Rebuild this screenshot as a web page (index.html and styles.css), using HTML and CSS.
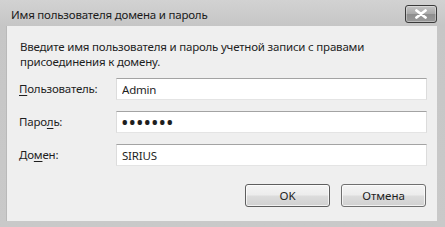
FILE: index.html
```html
<!DOCTYPE html>
<html lang="ru">
<head>
<meta charset="utf-8">
<title>Имя пользователя домена и пароль</title>
<link rel="stylesheet" href="styles.css">
</head>
<body>
<div class="window">
  <div class="titlebar">
    <span class="title">Имя пользователя домена и пароль</span>
    <button class="close" type="button" aria-label="Закрыть">
      <svg width="14" height="10" viewBox="0 0 14 10"><path d="M2.5 1.5 L11.5 8.5 M11.5 1.5 L2.5 8.5" stroke="#fff" stroke-width="2.8" stroke-linecap="round"/></svg>
    </button>
  </div>
  <div class="panel">
    <p class="desc">Введите имя пользователя и пароль учетной записи с правами присоединения к домену.</p>
    <div class="form">
      <label class="label" for="u"><u>П</u>ользователь:</label>
      <input class="field" id="u" type="text" value="Admin">
      <label class="label" for="p">Паро<u>л</u>ь:</label>
      <input class="field pass" id="p" type="password" value="1234567">
      <label class="label" for="d">До<u>м</u>ен:</label>
      <input class="field" id="d" type="text" value="SIRIUS">
    </div>
    <div class="buttons">
      <button class="btn default" type="button">OK</button>
      <button class="btn" type="button">Отмена</button>
    </div>
  </div>
</div>
</body>
</html>
```

FILE: styles.css
```css
html, body {
  margin: 0;
  padding: 0;
}
body {
  width: 445px;
  height: 227px;
  overflow: hidden;
  font-family: "Noto Sans", "Open Sans", sans-serif;
  font-size: 11.5px;
  letter-spacing: -0.2px;
  color: #1e1e1e;
}
.window {
  box-sizing: border-box;
  width: 445px;
  height: 227px;
  display: flex;
  flex-direction: column;
  padding: 0 8px 6px 6px;
  background: linear-gradient(to bottom, #d2d2d2 0px, #c6c6c6 26px, #c9c9c9 100%);
}
.titlebar {
  height: 26px;
  display: flex;
  align-items: flex-start;
}
.title {
  margin: 7px 0 0 5px;
  line-height: 16px;
  color: #1a1a1a;
}
.close {
  margin: 5px 0 0 auto;
  width: 32px;
  height: 18px;
  padding: 0;
  box-sizing: border-box;
  border: 1px solid #3a3a3a;
  border-radius: 3px;
  background: linear-gradient(to bottom, #c4c4c4 0%, #a8a8a8 50%, #8e8e8e 51%, #9a9a9a 100%);
  box-shadow: inset 0 0 0 1px rgba(255,255,255,0.35);
  display: flex;
  align-items: center;
  justify-content: center;
}
.panel {
  flex: 1;
  box-sizing: border-box;
  background: #efefef;
  border-left: 1px solid #b9b9b9;
  padding: 13px 10px 14px 12px;
  display: flex;
  flex-direction: column;
}
.desc {
  margin: 0 0 0 1px;
  line-height: 15px;
  width: 370px;
}
.form {
  margin-top: 9px;
  display: grid;
  grid-template-columns: 97px 1fr;
  row-gap: 11px;
  align-items: center;
}
.label {
  line-height: 16px;
}
.label u {
  text-decoration-thickness: 1px;
  text-underline-offset: 2px;
}
.field {
  box-sizing: border-box;
  height: 22px;
  width: 100%;
  margin: 0;
  padding: 0 5px;
  font-family: "Noto Sans", "Open Sans", sans-serif;
  font-size: 11.5px;
  letter-spacing: -0.2px;
  color: #1e1e1e;
  background: #fff;
  border: 1px solid #dcdcdc;
  border-top-color: #a3a3a3;
  border-bottom-color: #e4e4e4;
  border-radius: 0;
  outline: none;
}
.pass {
  font-size: 20px;
  letter-spacing: 0;
  padding-left: 4px;
}
.buttons {
  margin-top: auto;
  display: flex;
  justify-content: flex-end;
  gap: 11px;
  padding-right: 1px;
}
.btn {
  box-sizing: border-box;
  width: 85px;
  height: 23px;
  padding: 0;
  font-family: "Noto Sans", "Open Sans", sans-serif;
  font-size: 11.5px;
  color: #1e1e1e;
  border: 1px solid #707070;
  border-radius: 3px;
  background: linear-gradient(to bottom, #f4f4f4 0%, #ececec 48%, #dcdcdc 52%, #d0d0d0 100%);
  box-shadow: inset 0 0 0 1px rgba(255,255,255,0.7);
}
.btn.default {
  border-color: #5e5e5e;
}
```
